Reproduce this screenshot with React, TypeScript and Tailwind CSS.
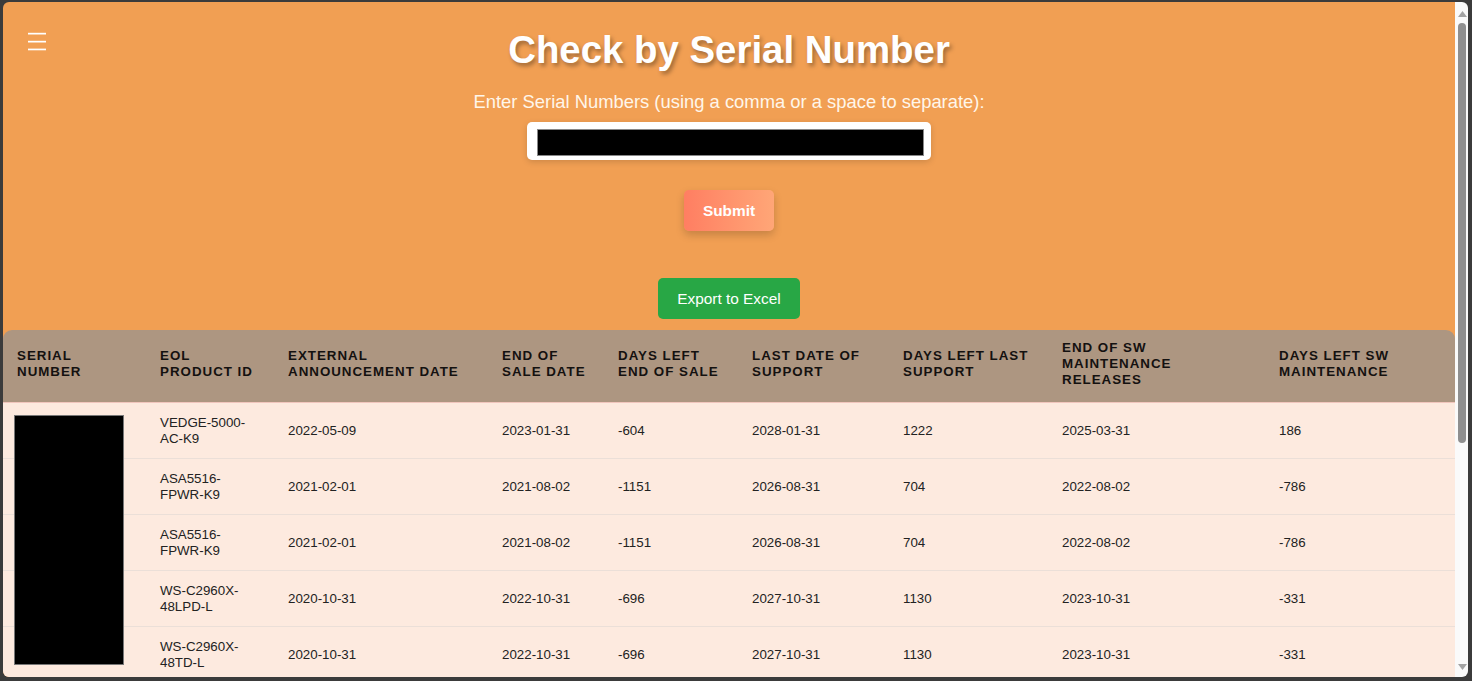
import React from "react";

const cols = [143, 128, 214, 116, 134, 151, 159, 217, 190];
const headers = [
  "Serial Number",
  "EOL Product ID",
  "External Announcement Date",
  "End of Sale Date",
  "Days Left End of Sale",
  "Last Date of Support",
  "Days Left Last Support",
  "End of SW Maintenance Releases",
  "Days Left SW Maintenance",
];

const rows: string[][] = [
  ["", "VEDGE-5000-AC-K9", "2022-05-09", "2023-01-31", "-604", "2028-01-31", "1222", "2025-03-31", "186"],
  ["", "ASA5516-FPWR-K9", "2021-02-01", "2021-08-02", "-1151", "2026-08-31", "704", "2022-08-02", "-786"],
  ["", "ASA5516-FPWR-K9", "2021-02-01", "2021-08-02", "-1151", "2026-08-31", "704", "2022-08-02", "-786"],
  ["", "WS-C2960X-48LPD-L", "2020-10-31", "2022-10-31", "-696", "2027-10-31", "1130", "2023-10-31", "-331"],
  ["", "WS-C2960X-48TD-L", "2020-10-31", "2022-10-31", "-696", "2027-10-31", "1130", "2023-10-31", "-331"],
];

export default function App() {
  return (
    <div
      className="w-[1472px] h-[681px] bg-[#3b3b3b] pt-[2px] pl-[3px] pr-[4px] pb-[4px] overflow-hidden"
      style={{ fontFamily: '"Liberation Sans", Arial, sans-serif' }}
    >
      <div className="w-full h-full rounded-[6px] overflow-hidden flex">
        {/* page content */}
        <div className="relative w-[1452px] h-full bg-[#f19f53] overflow-hidden">
          {/* hamburger */}
          <div className="absolute left-[25px] top-[30px]">
            <svg width="20" height="20" viewBox="0 0 20 20">
              <rect x="0" y="0.8" width="18" height="1.7" fill="#ffffff" />
              <rect x="0" y="8.8" width="18" height="1.7" fill="#ffffff" />
              <rect x="0" y="16.6" width="18" height="1.7" fill="#ffffff" />
            </svg>
          </div>

          <div className="flex flex-col items-center">
            <h1
              className="mt-[26px] text-[38.4px] leading-[44px] font-bold text-white"
              style={{ textShadow: "2px 3px 4px rgba(0,0,0,0.35)" }}
            >
              Check by Serial Number
            </h1>
            <div className="mt-[19px] text-[18.4px] leading-[21px] text-[#fff6ea]">
              Enter Serial Numbers (using a comma or a space to separate):
            </div>
            <div className="mt-[10px] w-[404px] h-[38px] bg-white rounded-[5px] pl-[10px] pr-[7px] pt-[7px] shadow-[0_2px_6px_rgba(0,0,0,0.15)]">
              <div className="w-full h-[27px] bg-black border border-[#888]" />
            </div>
            <button className="mt-[30px] w-[90px] h-[41px] rounded-[5px] text-white font-bold text-[15.4px] bg-gradient-to-r from-[#ff7e62] to-[#ffa677] shadow-[0_4px_8px_rgba(0,0,0,0.18)]">
              Submit
            </button>
            <button className="mt-[47px] w-[142px] h-[41px] rounded-[5px] text-white text-[15.4px] bg-[#28a745]">
              Export to Excel
            </button>
          </div>

          {/* table */}
          <div className="mt-[11px] rounded-t-[9px] overflow-hidden">
            <table className="table-fixed border-collapse w-[1452px]">
              <colgroup>
                {cols.map((w, i) => (
                  <col key={i} style={{ width: w }} />
                ))}
              </colgroup>
              <thead>
                <tr className="bg-[#ad9681] border-b border-[#f1c6bd]">
                  {headers.map((h, i) => (
                    <th
                      key={i}
                      className="px-[14px] pt-[10px] pb-[14px] text-left align-middle uppercase font-bold text-[13.33px] leading-[16px] tracking-[1px] text-[#141110]"
                    >
                      {h}
                    </th>
                  ))}
                </tr>
              </thead>
              <tbody>
                {rows.map((r, ri) => (
                  <tr key={ri} className="bg-[#fdeadf] border-b border-[#ebdfd8]">
                    {r.map((c, ci) => (
                      <td
                        key={ci}
                        className="px-[14px] pt-[12px] pb-[11px] h-[55px] align-middle text-[13.33px] leading-[16px] text-[#222]"
                      >
                        {c}
                      </td>
                    ))}
                  </tr>
                ))}
              </tbody>
            </table>
          </div>

          {/* redaction over serial numbers */}
          <div className="absolute left-[11px] top-[413px] w-[110px] h-[250px] bg-black border border-[#777]" />
        </div>

        {/* scrollbar */}
        <div className="relative w-[13px] h-full bg-[#fafafa]">
          <svg className="absolute left-[3px] top-[9px]" width="9" height="6" viewBox="0 0 9 6">
            <polygon points="4.5,0 9,6 0,6" fill="#a3a3a3" />
          </svg>
          <div className="absolute left-[3px] top-[21px] w-[8px] h-[420px] rounded-full bg-[#8f8f8f]" />
          <svg className="absolute left-[3px] bottom-[7px]" width="9" height="6" viewBox="0 0 9 6">
            <polygon points="0,0 9,0 4.5,6" fill="#a3a3a3" />
          </svg>
        </div>
      </div>
    </div>
  );
}
